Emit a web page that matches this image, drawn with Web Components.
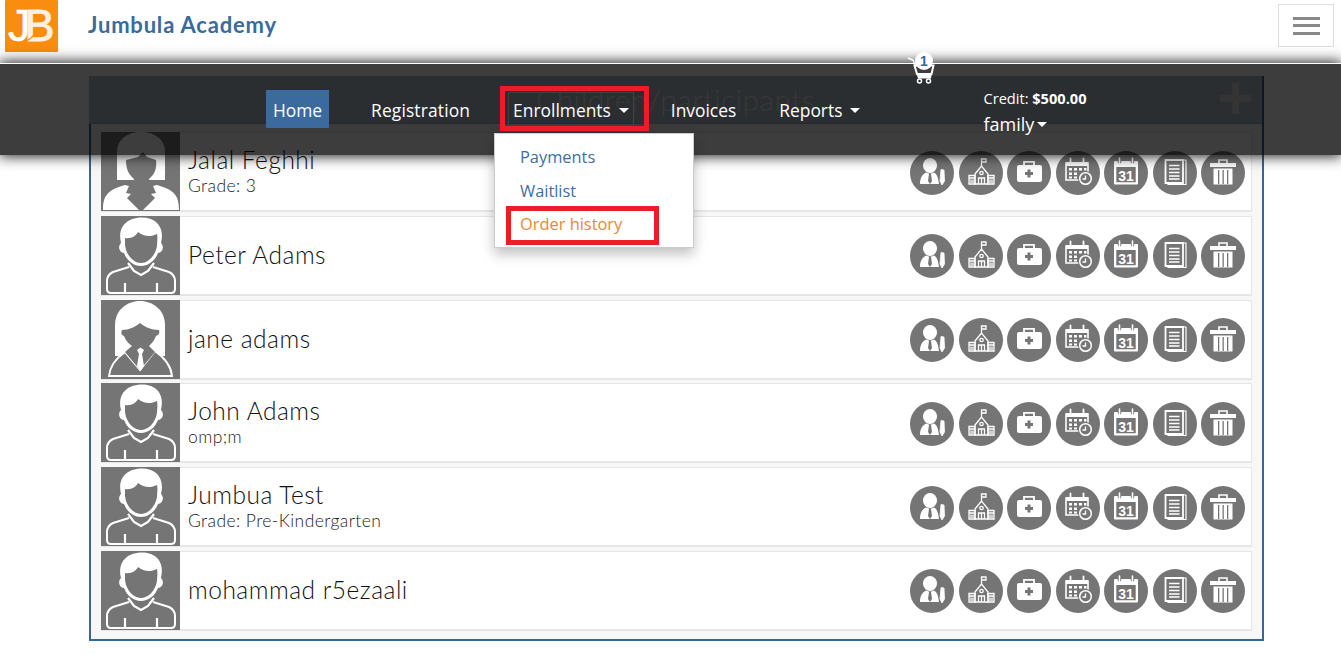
<!DOCTYPE html>
<html>
<head>
<meta charset="utf-8">
<title>Jumbula Academy</title>
<style>
html, body { margin: 0; padding: 0; background: #fff; }
body { font-family: "Lato", sans-serif; overflow: hidden; height: 655px; position: relative; }
</style>
</head>
<body>
<app-header></app-header>
<child-panel heading="Children/participants">
  <child-row avatar="girl" name="Jalal Feghhi" sub="Grade: 3"></child-row>
  <child-row avatar="boy" name="Peter Adams"></child-row>
  <child-row avatar="woman" name="jane adams"></child-row>
  <child-row avatar="boy" name="John Adams" sub="omp;m"></child-row>
  <child-row avatar="boy" name="Jumbua Test" sub="Grade: Pre-Kindergarten"></child-row>
  <child-row avatar="boy" name="mohammad r5ezaali"></child-row>
</child-panel>
<nav-overlay></nav-overlay>

<script>
const AVATARS = {
  boy: `
    <path fill="#fff" d="M20 27C16 10 27 1.500 41 1.500C55 1.500 64 11 60 27C64 31 61 37 57 37C54 45 47 50 40 50C33 50 26 45 23 37C19 37 16 31 20 27Z"/>
    <path fill="#757575" d="M24 22C30 23 35 20 37 16C43 21 50 21 56 18C57 22 56 26 56 30L55 34C52 42 46 47 40 47C34 47 28 42 25 34L24 29Z"/>
    <path fill="none" stroke="#fff" stroke-width="2" stroke-linejoin="round" d="M28 51L12 56C8 58 6 61 6 65L6 73Q6 77 10 77L70 77Q74 77 74 73L74 65C74 61 72 58 68 56L52 51"/>
    <path fill="none" stroke="#fff" stroke-width="2.200" d="M27 47L33 55L40 59L47 55L53 47M24 67V77M56 67V77"/>`,
  girl: `
    <path fill="#fff" d="M16 48V20C16 7 27 0 40 0C53 0 64 7 64 20V48Z"/>
    <path fill="#757575" d="M25 28L37 25L42 20L46 25L55 28C56 36 54 42 48 47V51L54 55L40 76L26 55L33 51V47C27 42 25 36 25 28Z"/>
    <path fill="#fff" d="M2 78C2 64 6 58 24 53L28 54L25 61L30 62L26 66L38 78ZM78 78C78 64 74 58 56 53L52 54L55 61L50 62L54 66L42 78Z"/>`,
  woman: `
    <path fill="#fff" d="M14 56V25C14 10 26 1 39 1C52 1 64 10 64 25V56Z"/>
    <path fill="#757575" d="M8 76C9 66 14 59 24 52L39 70L54 51C64 58 70 66 71 76Z" stroke="#fff" stroke-width="2"/>
    <path fill="#757575" d="M21 30C28 30 34 27 39 23C44 27 50 30 58 30C59 33 58 35 55 36C53 41 50 44 48 46L54 52L39 70L24 52L31 46C28 44 25 41 23 36C20 35 20 32 21 30Z"/>
    <path fill="#fff" d="M36 50L39.500 47.500L43 50L41 54L43 66L39.500 71L36 66L38 54Z"/>`
};

const ICONS = [
  // teacher with pencil
  `<ellipse cx="20" cy="14.500" rx="7" ry="7.500"/>
   <path d="M10 33C10 26 13 23 16 21.500L20 23L24 21.500C27 23 28 26 29 33Z"/>
   <path fill="#757575" d="M19 23H21L22 30L20 33L18 30Z"/>
   <path d="M30 30L31 18.500L34 19L34.500 30L32 34Z" stroke="#fff" stroke-width=".8"/>`,
  // school
  `<g fill="none" stroke="#fff" stroke-width="1.300">
     <path d="M22.500 15V8H27V11H22.500"/>
     <path d="M16 23L22.500 15L29 23V33H16Z"/>
     <path d="M10 24.500H16V33H10ZM29 24.500H35V33H29ZM10 27H16M29 27H35M19.500 33V27H25.500V33M22.500 27V33M12 28.500V32M14 28.500V32M31 28.500V32M33 28.500V32"/>
     <circle cx="22.500" cy="22" r="1.700"/>
   </g>`,
  // first aid kit
  `<path fill="none" stroke="#fff" stroke-width="1.800" d="M17 14.500V10.800H27V14.500"/>
   <path d="M10 16Q10 14 12 14H33Q35 14 35 16V29Q35 31 33 31H12Q10 31 10 29Z"/>
   <path fill="#757575" d="M20.500 18.500H23.500V21H26V24H23.500V26.500H20.500V24H18V21H20.500Z"/>`,
  // calendar with clock
  `<path d="M10 12H32V29H10Z" fill="none" stroke="#fff" stroke-width="1.600"/>
   <path d="M10 11H32V15H10Z"/>
   <path d="M14.500 7.500V12M27.500 7.500V12" stroke="#fff" stroke-width="1.800" stroke-linecap="round"/>
   <path d="M13 17H16V19.500H13ZM18 17H21V19.500H18ZM23 17H26V19.500H23ZM28 17H30.500V19.500H28ZM13 21.500H16V24H13ZM18 21.500H21V24H18ZM13 25.500H16V27.500H13ZM18 25.500H21V27.500H18Z"/>
   <circle cx="29.500" cy="27.500" r="7.500" fill="#757575"/>
   <circle cx="29.500" cy="27.500" r="5.800" fill="none" stroke="#fff" stroke-width="1.500"/>
   <path d="M29.500 24.500V28H26.500" fill="none" stroke="#fff" stroke-width="1.300"/>`,
  // calendar 31
  `<path d="M10 11Q10 10 11 10H33Q34 10 34 11V32Q34 33.500 33 33.500H11Q10 33.500 10 32Z"/>
   <path fill="#757575" d="M12.300 16H31.700V31.300H12.300Z"/>
   <path fill="none" stroke="#757575" stroke-width="3.600" stroke-linecap="round" d="M15.500 8V11M28.500 8V11"/>
   <path fill="none" stroke="#fff" stroke-width="1.600" stroke-linecap="round" d="M15.500 7V12.500M28.500 7V12.500"/>
   <text x="22" y="29.500" text-anchor="middle" font-family="Liberation Sans, sans-serif" font-weight="700" font-size="14">31</text>`,
  // document
  `<path d="M12.500 9H30V32H12.500Z" fill="none" stroke="#fff" stroke-width="1.800"/>
   <path d="M30 9H33V33.500H15V32" fill="none" stroke="#fff" stroke-width="1.200"/>
   <path d="M16 14.500H26.500M16 18H26.500M16 21.500H26.500M16 25H26.500M16 28H26.500" stroke="#fff" stroke-width="1.400"/>`,
  // trash
  `<path d="M9 12H35V16H9Z"/>
   <path d="M18 12V9H26V12" fill="none" stroke="#fff" stroke-width="1.600"/>
   <path d="M12.500 17.500H31.500V33.500H12.500Z"/>
   <path fill="#757575" d="M17 19H18.300V33H17ZM21.500 19H22.800V33H21.500ZM26 19H27.300V33H26Z"/>`
];

class ChildRow extends HTMLElement {
  constructor() {
    super();
    this.attachShadow({ mode: 'open' });
  }
  connectedCallback() {
    const name = this.getAttribute('name');
    const sub = this.getAttribute('sub');
    const avatar = AVATARS[this.getAttribute('avatar')];
    this.shadowRoot.innerHTML = `
      <style>
        :host { display: flex; align-items: center; box-sizing: border-box; height: 80px; background: #fff;
                border: 1px solid #e6e6e6; border-bottom-width: 2px; border-left: 0; color: #111; }
        .avatar { flex: none; width: 79px; height: 79px; background: #757575; display: block; }
        .info { flex: 1; padding-left: 8px; font-family: "Lato", sans-serif; font-weight: 300; }
        .name { font-size: 24.5px; line-height: 26px; letter-spacing: .5px; }
        .sub { font-size: 17.5px; line-height: 20px; letter-spacing: .42px; color: #222; margin-top: 3px; padding-bottom: 1px; }
        .actions { display: flex; gap: 4.5px; padding: 2px 6px 0 0; }
        .btn { width: 44px; height: 44px; border-radius: 50%; background: #757575; display: block; fill: #fff; }
      </style>
      <svg class="avatar" viewBox="0 0 79 79">${avatar}</svg>
      <div class="info">
        <div class="name">${name}</div>
        ${sub ? `<div class="sub">${sub}</div>` : ''}
      </div>
      <div class="actions">
        ${ICONS.map(i => `<svg class="btn" viewBox="0 0 44 44">${i}</svg>`).join('')}
      </div>`;
  }
}

class ChildPanel extends HTMLElement {
  constructor() {
    super();
    this.attachShadow({ mode: 'open' });
  }
  connectedCallback() {
    this.shadowRoot.innerHTML = `
      <style>
        :host { display: block; box-sizing: border-box; width: 1175px; height: 565px; margin: 76px 0 0 89px;
                border: 2px solid #336699; background: #f7f7f7; }
        .head { display: flex; align-items: center; justify-content: center; position: relative; height: 48px;
                margin: -2px 0 0 -2px; box-sizing: border-box; padding-bottom: 2px;
                background: #afc0cc; border-bottom: 1px solid #9fb0bc; color: #e6e6e6; font-family: "Lato", sans-serif;
                font-weight: 300; font-size: 30px; letter-spacing: .4px; }
        .plus { position: absolute; right: 8px; top: 2px; font: 700 62px/40px "Liberation Sans", sans-serif; color: #d8d8d8; }
        .rows { display: flex; flex-direction: column; gap: 3.8px; padding: 8px 10px 0; }
      </style>
      <div class="head">${this.getAttribute('heading')}<span class="plus">+</span></div>
      <div class="rows"><slot></slot></div>`;
  }
}

class AppHeader extends HTMLElement {
  constructor() {
    super();
    this.attachShadow({ mode: 'open' });
  }
  connectedCallback() {
    this.shadowRoot.innerHTML = `
      <style>
        :host { display: flex; align-items: flex-start; position: absolute; left: 0; top: 0; right: 0; height: 63px; }
        .logo { display: block; width: 53px; height: 52px; margin-left: 5px; }
        .brand { margin: 12px 0 0 30px; color: #3a6a9e; font: 700 22px/26px "Lato", sans-serif; letter-spacing: .8px; }
        .burger { margin: 4px 7px 0 auto; box-sizing: border-box; width: 56px; height: 43px; border: 1.500px solid #ddd;
                  display: flex; flex-direction: column; justify-content: center; gap: 4.5px; align-items: center; }
        .burger i { display: block; width: 27px; height: 3px; background: #888; }
      </style>
      <svg class="logo" viewBox="0 0 53 52">
        <rect width="53" height="52" rx="1" fill="#f98d10"/>
        <text x="3" y="41" font-family="Liberation Sans, sans-serif" font-size="45" fill="#fff" stroke="#fff" stroke-width=".5">J</text>
        <text x="19.500" y="41" font-family="Liberation Sans, sans-serif" font-size="45" fill="#fdf0e0" stroke="#fdf0e0" stroke-width="1">B</text>
        <path d="M17 41.500C23 41.500 28 38 31 31" fill="none" stroke="#f98d10" stroke-width="1.200"/>
      </svg>
      <div class="brand">Jumbula Academy</div>
      <div class="burger"><i></i><i></i><i></i></div>`;
  }
}

class NavOverlay extends HTMLElement {
  constructor() {
    super();
    this.attachShadow({ mode: 'open' });
  }
  connectedCallback() {
    this.shadowRoot.innerHTML = `
      <style>
        :host { display: block; position: absolute; left: 0; right: 0; top: 63px; height: 92px; box-sizing: border-box;
                border-top: 1px solid #fff; background: rgba(0,0,0,.76); box-shadow: 0 0 13px 1px rgba(0,0,0,.9);
                font-family: "Open Sans", sans-serif; color: #fff; font-size: 17.4px; }
        nav { display: flex; align-items: flex-start; padding: 26px 0 0 266px; }
        .item { display: flex; align-items: center; box-sizing: border-box; height: 38px; padding: 2px 7px 0; line-height: 36px; }
        .active { background: #3a6a9e; width: 63px; justify-content: center; padding: 1px 0 0; }
        .caret { display: inline-block; margin-left: 8px; border: 5px solid transparent; border-top-color: #fff; border-bottom: 0; }
        .reg { margin-left: 35px; letter-spacing: .15px; }
        .enr { margin-left: 29px; position: relative; outline: 1px solid #404244; outline-offset: -3px; }
        .inv { margin-left: 28px; }
        .rep { margin-left: 29px; }
        .user { margin-left: 116px; margin-top: -2px; }
        .credit { font-size: 14.6px; line-height: 20px; }
        .credit b { font-weight: 700; }
        .fam { line-height: 32px; font-size: 18px; display: flex; align-items: center; }
        .fam .caret { margin-left: 3px; }
        .mark { position: absolute; box-sizing: border-box; border: 5px solid #ee1c25; }
        .mark.a { left: 500px; top: 22px; width: 149px; height: 45px; }
        .menu { position: absolute; left: 494px; top: 69px; width: 200px; height: 115px; box-sizing: border-box;
                background: #fff; border: 1px solid #ccc; box-shadow: 0 6px 12px rgba(0,0,0,.25);
                display: flex; flex-direction: column; padding: 6px 0 0 25px; font-size: 16.4px; color: #3f6f9f; }
        .menu div { height: 33.500px; line-height: 33px; }
        .menu .hot { color: #e68a2e; }
        .mark.b { left: 506px; top: 142px; width: 153px; height: 39px; }
        .cart { position: absolute; left: 905px; top: -10px; width: 32px; height: 32px; }
        .badge { position: absolute; left: 915px; top: -12px; width: 18px; height: 18px; border-radius: 50%; background: #fff;
                 color: #336699; font: 700 14px/18px "Liberation Sans", sans-serif; text-align: center; }
      </style>
      <nav>
        <div class="item active">Home</div>
        <div class="item reg">Registration</div>
        <div class="item enr">Enrollments<span class="caret"></span></div>
        <div class="item inv">Invoices</div>
        <div class="item rep">Reports<span class="caret"></span></div>
        <div class="user">
          <div class="credit">Credit: <b>$500.00</b></div>
          <div class="fam">family<span class="caret"></span></div>
        </div>
      </nav>
      <div class="menu">
        <div>Payments</div>
        <div>Waitlist</div>
        <div class="hot">Order history</div>
      </div>
      <div class="mark a"></div>
      <div class="mark b"></div>
      <svg class="cart" viewBox="0 0 32 32">
        <path d="M3 4L8 6L11 13" fill="none" stroke="#fff" stroke-width="1.500"/>
        <path d="M9.500 11.500H28.500L26.500 20H12Z" fill="none" stroke="#fff" stroke-width="2"/>
        <path d="M11.500 19H27L26 24.500H13Z" fill="#fff"/>
        <circle cx="14.500" cy="27" r="2" fill="none" stroke="#fff" stroke-width="1.500"/>
        <circle cx="23.500" cy="27" r="2" fill="none" stroke="#fff" stroke-width="1.500"/>
      </svg>
      <div class="badge">1</div>`;
  }
}

customElements.define('child-row', ChildRow);
customElements.define('child-panel', ChildPanel);
customElements.define('app-header', AppHeader);
customElements.define('nav-overlay', NavOverlay);
</script>
</body>
</html>
